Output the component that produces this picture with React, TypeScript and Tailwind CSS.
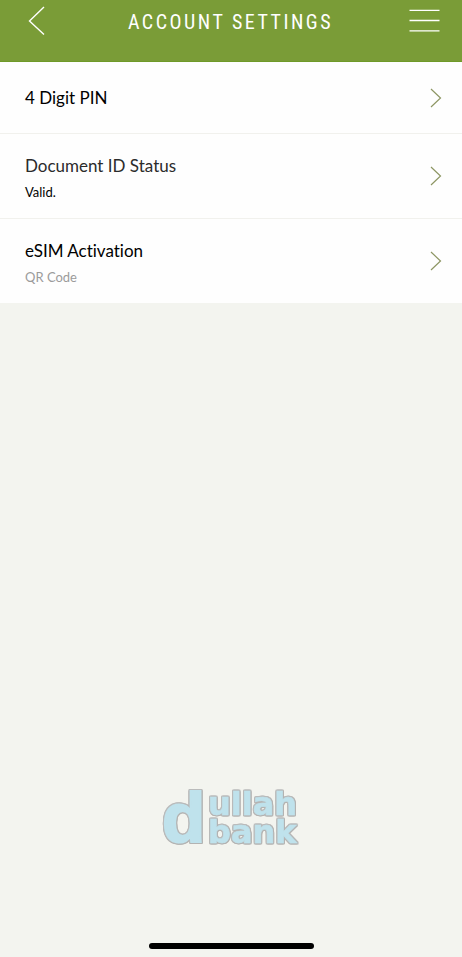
import React from "react";

type Setting = {
  id: string;
  title: string;
  titleClass: string;
  detail?: string;
  detailClass?: string;
};

const settings: Setting[] = [
  { id: "pin", title: "4 Digit PIN", titleClass: "text-black" },
  {
    id: "document",
    title: "Document ID Status",
    titleClass: "text-[#2b2b2b]",
    detail: "Valid.",
    detailClass: "text-black",
  },
  {
    id: "esim",
    title: "eSIM Activation",
    titleClass: "text-black",
    detail: "QR Code",
    detailClass: "text-[#9b9b9b]",
  },
];

const Header: React.FC = () => (
  <header className="flex h-[62px] items-start justify-between border-b border-[#6f9a28] bg-[#7a9c37] pr-[22px] pl-7">
    <button type="button" aria-label="Back" className="pt-1.5">
      <svg width="24" height="30" viewBox="0 0 24 30" fill="none" stroke="#fff" strokeWidth="1.4">
        <path d="M16 1 L1.500 15 L16 28.500" />
      </svg>
    </button>
    <h1 className="pt-2 font-['Roboto_Condensed','Liberation_Sans_Narrow','Roboto',sans-serif] text-xl leading-7 tracking-[0.125em] text-white">
      ACCOUNT SETTINGS
    </h1>
    <button type="button" aria-label="Menu" className="pt-2">
      <svg width="31" height="25" viewBox="0 0 31 25" fill="none" stroke="#fff" strokeWidth="1.3">
        <path d="M0.500 2.300 H30.500 M0.500 12.500 H30.500 M0.500 22.800 H30.500" />
      </svg>
    </button>
  </header>
);

const SettingRow: React.FC<{ setting: Setting }> = ({ setting }) => (
  <li className="border-b border-[#f1f1ed] last:border-b-0">
    <button
      type="button"
      className="flex min-h-[71px] w-full items-center justify-between py-4 pr-5 pl-[25px] text-left"
    >
      <span className="flex flex-col">
        <span className={`text-[17px] leading-8 ${setting.titleClass}`}>{setting.title}</span>
        {setting.detail && (
          <span className={`text-[13px] leading-5 ${setting.detailClass}`}>{setting.detail}</span>
        )}
      </span>
      <svg width="12" height="20" viewBox="0 0 12 20" fill="none" stroke="#8d9663" strokeWidth="1.2">
        <path d="M1 1 L10.500 10 L1 19" />
      </svg>
    </button>
  </li>
);

const Logo: React.FC = () => (
  <svg width="146" height="80" viewBox="0 0 146 80" role="img" aria-label="dullah bank">
    <g
      fill="#bfe2ec"
      stroke="#bfe2ec"
      strokeWidth="0.6"
      fontWeight="700"
      className="[filter:drop-shadow(1px_0_0_#b3b3b2)_drop-shadow(-1px_0_0_#babbbb)_drop-shadow(0_1px_0_#b3b3b2)_drop-shadow(0_-1px_0_#babbbb)]"
    >
      <text x="4" y="63" fontSize="71" fontFamily="'Liberation Sans', sans-serif" strokeWidth="2">
        d
      </text>
      <text x="50" y="36" fontSize="32" fontFamily="'DejaVu Sans', sans-serif">
        ullah
      </text>
      <text x="50" y="64" fontSize="32" fontFamily="'DejaVu Sans', sans-serif">
        bank
      </text>
    </g>
  </svg>
);

const App: React.FC = () => {
  return (
    <div className="flex min-h-screen flex-col bg-[#f3f4ef] font-['Lato',sans-serif] [font-variant-ligatures:none]">
      <Header />
      <main className="flex flex-1 flex-col">
        <ul className="bg-[#fefefe]">
          {settings.map((setting) => (
            <SettingRow key={setting.id} setting={setting} />
          ))}
        </ul>
        <div className="mt-auto flex justify-center pb-21">
          <Logo />
        </div>
      </main>
      <footer className="flex justify-center pb-2">
        <div className="h-1.5 w-[165px] rounded-full bg-black" />
      </footer>
    </div>
  );
};

export default App;
